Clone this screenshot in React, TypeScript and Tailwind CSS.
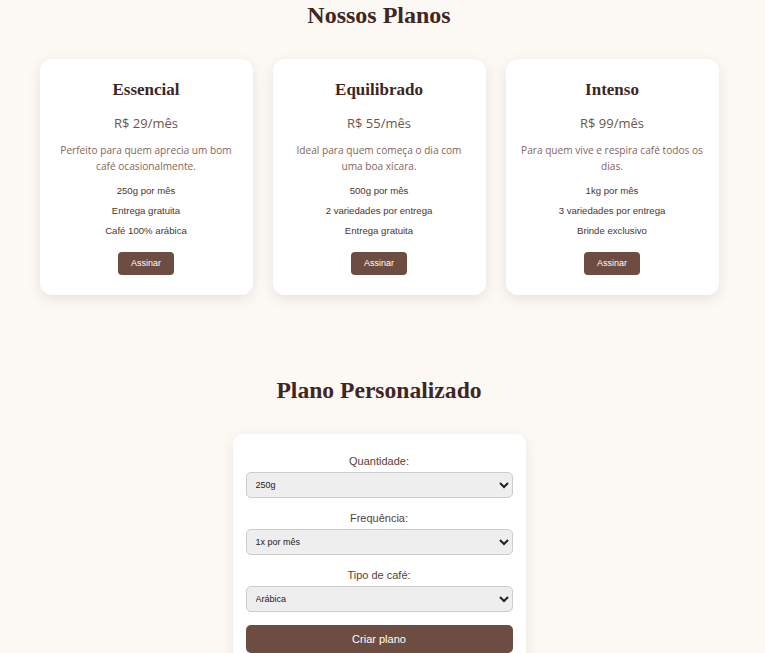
const plans = [
  {
    name: "Essencial",
    price: "R$ 29/mês",
    desc: "Perfeito para quem aprecia um bom café ocasionalmente.",
    features: ["250g por mês", "Entrega gratuita", "Café 100% arábica"],
  },
  {
    name: "Equilibrado",
    price: "R$ 55/mês",
    desc: "Ideal para quem começa o dia com uma boa xícara.",
    features: ["500g por mês", "2 variedades por entrega", "Entrega gratuita"],
  },
  {
    name: "Intenso",
    price: "R$ 99/mês",
    desc: "Para quem vive e respira café todos os dias.",
    features: ["1kg por mês", "3 variedades por entrega", "Brinde exclusivo"],
  },
];

const fields = [
  { label: "Quantidade:", options: ["250g", "500g", "1kg"] },
  { label: "Frequência:", options: ["1x por mês", "2x por mês"] },
  { label: "Tipo de café:", options: ["Arábica", "Robusta", "Blend"] },
];

function PlanCard({ plan }: { plan: (typeof plans)[number] }) {
  return (
    <div className="flex w-[213px] flex-col items-center rounded-xl bg-white px-[14px] pb-5 pt-[18px] text-center shadow-[0_4px_14px_rgba(0,0,0,0.09)]">
      <h3 className="font-['Liberation_Serif',serif] text-[17px] font-bold text-[#3e2723]">
        {plan.name}
      </h3>
      <p className="mt-[11px] font-['Open_Sans',sans-serif] text-[13px] text-[#6d5548]">
        {plan.price}
      </p>
      <p className="mt-[9px] font-['Open_Sans',sans-serif] text-[10.15px] leading-[16px] text-[#85655a]">
        {plan.desc}
      </p>
      <ul className="mt-[7px] font-['Liberation_Sans',sans-serif] text-[9.6px] text-[#4e342e]">
        {plan.features.map((f) => (
          <li key={f} className="py-[4px] leading-[12px]">
            {f}
          </li>
        ))}
      </ul>
      <button className="mt-[11px] h-[23px] rounded-[4px] bg-[#6d4c41] px-[13px] font-['Liberation_Sans',sans-serif] text-[9px] text-white">
        Assinar
      </button>
    </div>
  );
}

export default function App() {
  return (
    <div className="min-h-[653px] bg-[#fcf8f3] pr-[7px] pb-10">
      <section>
        <h2 className="pt-[1px] text-center font-['Liberation_Serif',serif] text-[24px] font-bold leading-[28px] text-[#3e2723]">
          Nossos Planos
        </h2>
        <div className="mt-[30px] flex justify-center gap-5">
          {plans.map((p) => (
            <PlanCard key={p.name} plan={p} />
          ))}
        </div>
      </section>

      <section className="mt-[81px]">
        <h2 className="text-center font-['Liberation_Serif',serif] text-[23.6px] font-bold leading-[28px] text-[#3e2723]">
          Plano Personalizado
        </h2>
        <div className="mx-auto mt-[30px] flex w-[293px] flex-col rounded-[10px] bg-white px-[13px] pt-[20px] pb-5 shadow-[0_4px_14px_rgba(0,0,0,0.08)]">
          {fields.map((f) => (
            <label key={f.label} className="mb-[13px] flex flex-col items-center font-['Liberation_Sans',sans-serif]">
              <span className="text-[11px] leading-[14px] text-[#5d4037]">{f.label}</span>
              <select className="mt-[4px] h-[26px] w-full rounded-[5px] border border-[#cccccc] bg-[#eeeeee] px-[5px] text-[9px] text-[#222]">
                {f.options.map((o) => (
                  <option key={o}>{o}</option>
                ))}
              </select>
            </label>
          ))}
          <button className="h-[28px] w-full rounded-[5px] bg-[#6d4c41] font-['Liberation_Sans',sans-serif] text-[11px] text-white">
            Criar plano
          </button>
        </div>
      </section>
    </div>
  );
}
